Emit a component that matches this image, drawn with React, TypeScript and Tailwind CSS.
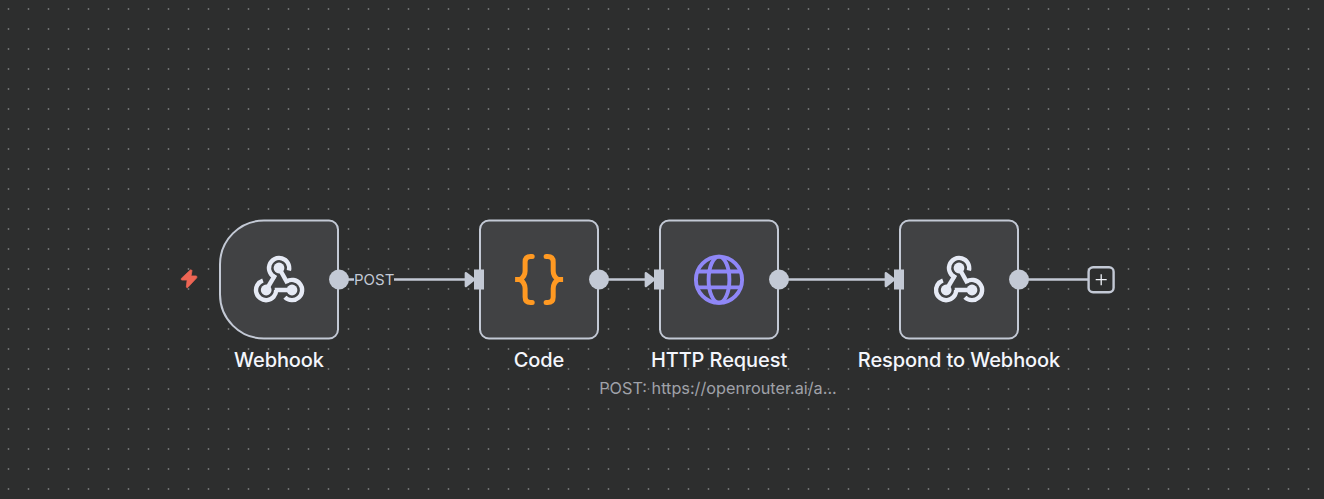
import type { ReactNode } from 'react';

const WebhookIcon = () => (
  <svg width="52" height="52" viewBox="0 0 52 52" fill="none">
    <g stroke="#e6eaf5" strokeWidth="4.4">
      <path d="M13.2 36.5 L22.2 21.4" />
      <path d="M26 14.5 L34.5 29.6" />
      <path d="M39 36.5 H21.7" />
      <path d="M35.9 17 A10.1 10.1 0 1 0 22.7 24" />
      <path d="M33.3 28.2 A10.1 10.1 0 1 1 31.9 43.7" />
      <path d="M9.9 27 A10.1 10.1 0 1 0 23.2 36.5" />
    </g>
    <g fill="#e6eaf5">
      <circle cx="26" cy="14.5" r="5.4" />
      <circle cx="13.2" cy="36.5" r="5.4" />
      <circle cx="39" cy="36.5" r="5.4" />
    </g>
  </svg>
);

const CodeIcon = () => (
  <svg width="52" height="52" viewBox="0 0 52 52" fill="none" stroke="#ff9922" strokeWidth="5">
    <path strokeLinecap="round" d="M19.2 3.1 H17.6 Q12.1 3.1 12.1 8.6 V17.5 C12.1 22 10 24.2 7 26.1 C10 28 12.1 30.7 12.1 35 V43.6 Q12.1 49.1 17.6 49.1 H19.2" />
    <path strokeLinecap="round" d="M33.1 3.1 H34.7 Q40.2 3.1 40.2 8.6 V17.5 C40.2 22 42.2 24.2 45.2 26.1 C42.2 28 40.2 30.7 40.2 35 V43.6 Q40.2 49.1 34.7 49.1 H33.1" />
    <path d="M2.1 26.1 H8.4 M43.8 26.1 H50.1" />
  </svg>
);

const GlobeIcon = () => (
  <svg width="52" height="52" viewBox="0 0 52 52" fill="none" stroke="#8f87f7" strokeWidth="3.9">
    <circle cx="26" cy="26.2" r="23.1" />
    <ellipse cx="26" cy="26.2" rx="10.4" ry="23.1" />
    <path d="M4.5 18 H47.5 M4.5 33.9 H47.5" />
  </svg>
);

const BoltIcon = () => (
  <svg width="18" height="20" viewBox="0 0 18 20" className="absolute left-[180px] top-[269px]">
    <path
      d="M10.3 1 L1.3 9.4 Q0.7 11 2.1 11.1 H7.1 L6.3 18 Q6.8 19.2 7.7 18.6 L16.8 8.8 Q17.5 7 15.9 6.9 H11.1 L12 1.6 Q11.4 0.4 10.3 1 Z"
      fill="#ee6554"
      stroke="#ee6554"
      strokeWidth="0.7"
      strokeLinejoin="round"
    />
  </svg>
);

type NodeProps = {
  name: string;
  shape?: string;
  subtitle?: string;
  input?: boolean;
  children: ReactNode;
};

function CanvasNode({ name, shape = 'rounded-[10px]', subtitle, input = true, children }: NodeProps) {
  return (
    <div className="flex w-[120px] flex-col items-center">
      <div
        className={`relative flex h-[120px] w-[120px] -translate-y-[0.5px] items-center justify-center border-2 border-[#c3c9d5] bg-[#414244] ${shape}`}
      >
        {children}
        {input && <span className="absolute -left-[7px] top-[48px] h-[20px] w-[10px] bg-[#c3c9d5]" />}
        <span className="absolute -right-[12px] top-[48px] h-[20px] w-[20px] rounded-full bg-[#c3c9d5]" />
      </div>
      <div className="mt-2 whitespace-nowrap text-[20px] font-medium leading-6 tracking-[-0.09px] text-[#f4f6fc]">{name}</div>
      {subtitle && (
        <div className="mt-1 whitespace-nowrap pr-[2px] text-[16.25px] leading-6 text-[#a0a2a9]">{subtitle}</div>
      )}
    </div>
  );
}

const arrows = [465, 645, 885];

function Connections() {
  return (
    <svg width="1324" height="499" className="absolute inset-0" fill="none" stroke="#c3c9d5">
      <path strokeWidth="2.5" d="M339 279.5 H468 M599 279.5 H648 M779 279.5 H888 M1019 279.5 H1088" />
      {arrows.map((x) => (
        <path
          key={x}
          d={`M${x + 0.9} 273.2 L${x + 9} 279.6 L${x + 0.9} 286 Z`}
          fill="#c3c9d5"
          strokeWidth="2.5"
          strokeLinejoin="round"
        />
      ))}
    </svg>
  );
}

export default function App() {
  return (
    <main className="relative h-[499px] w-[1324px] overflow-hidden bg-[#2d2e2e] font-['Inter',sans-serif]">
      <svg width="1324" height="499" className="absolute inset-0">
        <defs>
          <pattern id="dots" width="20" height="20" patternUnits="userSpaceOnUse">
            <circle cx="8.5" cy="9" r="0.9" fill="#747676" />
          </pattern>
        </defs>
        <rect width="1324" height="499" fill="url(#dots)" />
      </svg>
      <Connections />
      <BoltIcon />
      <div className="relative flex items-start pl-[219px] pt-[220px]">
        <CanvasNode name="Webhook" shape="rounded-l-[45px] rounded-r-[10px]" input={false}>
          <WebhookIcon />
        </CanvasNode>
        <div className="flex gap-[60px] pl-[140px]">
          <CanvasNode name="Code">
            <CodeIcon />
          </CanvasNode>
          <CanvasNode name="HTTP Request" subtitle="POST: https://openrouter.ai/a...">
            <GlobeIcon />
          </CanvasNode>
        </div>
        <div className="flex pl-[120px]">
          <CanvasNode name="Respond to Webhook">
            <WebhookIcon />
          </CanvasNode>
        </div>
        <button aria-label="Add node" className="ml-[68px] mt-[46px] flex h-[28px] w-[28px] items-center justify-center">
          <svg width="28" height="28" viewBox="0 0 28 28" fill="none">
            <rect x="1.6" y="1.2" width="25" height="25" rx="4.5" fill="#2d2e2e" stroke="#c3c9d5" strokeWidth="2.4" />
            <path d="M8.7 13.7 H19.7 M14.2 8.2 V19.2" stroke="#f0f2f8" strokeWidth="1.3" />
          </svg>
        </button>
      </div>
      <span className="absolute left-[354px] top-[270px] bg-[#2d2e2e] text-[15px] leading-[20px] text-[#c3c9d5]">POST</span>
    </main>
  );
}
